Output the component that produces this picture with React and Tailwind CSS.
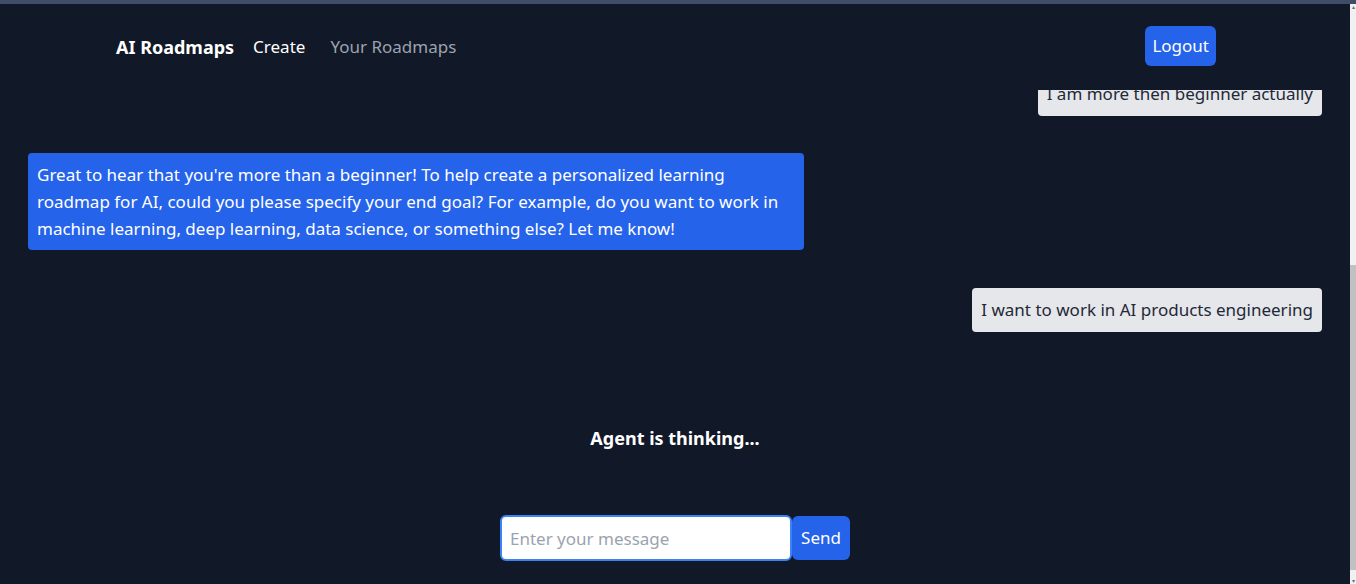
const FONT = { fontFamily: '"Noto Sans", "Open Sans", sans-serif' };

function Header() {
  return (
    <header className="h-[86px] shrink-0 flex items-center bg-[#111827] pl-[116px] pr-[134px]">
      <div className="flex items-center flex-1">
        <span className="text-lg font-bold text-white">AI Roadmaps</span>
        <a className="ml-[19px] text-[17px] text-white">Create</a>
        <a className="ml-[25px] text-[17px] text-[#9ca3af]">Your Roadmaps</a>
      </div>
      <button className="bg-[#2563eb] text-white text-[17px] rounded-md px-[7px] h-10 -mt-[2px]">Logout</button>
    </header>
  );
}

function UserBubble({ children, className = "" }) {
  return (
    <div className={`flex justify-end ${className}`}>
      <div className="bg-[#e5e7eb] text-[#1f2937] rounded text-[17px] leading-7 px-[9px] py-2">{children}</div>
    </div>
  );
}

function AgentBubble({ lines }) {
  return (
    <div className="flex justify-start">
      <div className="bg-[#2563eb] text-white rounded text-[17px] leading-[27px] px-[9px] py-[8px] w-[60%]">
        {lines.map((l, i) => (
          <span key={i} className="block whitespace-nowrap">{l}</span>
        ))}
      </div>
    </div>
  );
}

export default function App() {
  return (
    <div className="h-[584px] flex flex-col bg-[#111827] overflow-hidden" style={FONT}>
      <div className="h-[4px] shrink-0 bg-[#3f4d69]" />
      <div className="flex flex-1 min-h-0">
        <div className="flex-1 flex flex-col min-w-0">
          <Header />
          <div className="flex-1 overflow-hidden px-[28px]">
            <div className="-mt-[18px] flex flex-col gap-[37px]">
              <UserBubble>I am more then beginner actually</UserBubble>
              <AgentBubble
                lines={[
                  "Great to hear that you're more than a beginner! To help create a personalized learning",
                  "roadmap for AI, could you please specify your end goal? For example, do you want to work in",
                  "machine learning, deep learning, data science, or something else? Let me know!",
                ]}
              />
              <UserBubble className="mt-[1px]">I want to work in AI products engineering</UserBubble>
            </div>
            <p className="text-center text-lg font-bold text-white mt-[92px]">Agent is thinking...</p>
            <form className="flex justify-center items-center mt-[63px]" onSubmit={e => e.preventDefault()}>
              <input
                type="text"
                placeholder="Enter your message"
                className="w-[292px] h-[46px] bg-white border-2 border-[#3b82f6] rounded-md px-2 text-[17px] text-[#1f2937] placeholder:text-[#9ca3af] outline-none"
              />
              <button className="bg-[#2563eb] text-white text-[17px] rounded-md w-[58px] h-[44px]">Send</button>
            </form>
          </div>
        </div>
        {/* fake scrollbar */}
        <div className="w-[6px] shrink-0 bg-[#f1f1f1] flex flex-col">
          <div className="h-[6px] text-[6px] leading-[6px] text-gray-500 text-center">▴</div>
          <div className="h-[255px]" />
          <div className="flex-1 bg-[#c1c1c1] mb-[8px]" />
          <div className="h-[6px] text-[6px] leading-[6px] text-gray-500 text-center">▾</div>
        </div>
      </div>
    </div>
  );
}
